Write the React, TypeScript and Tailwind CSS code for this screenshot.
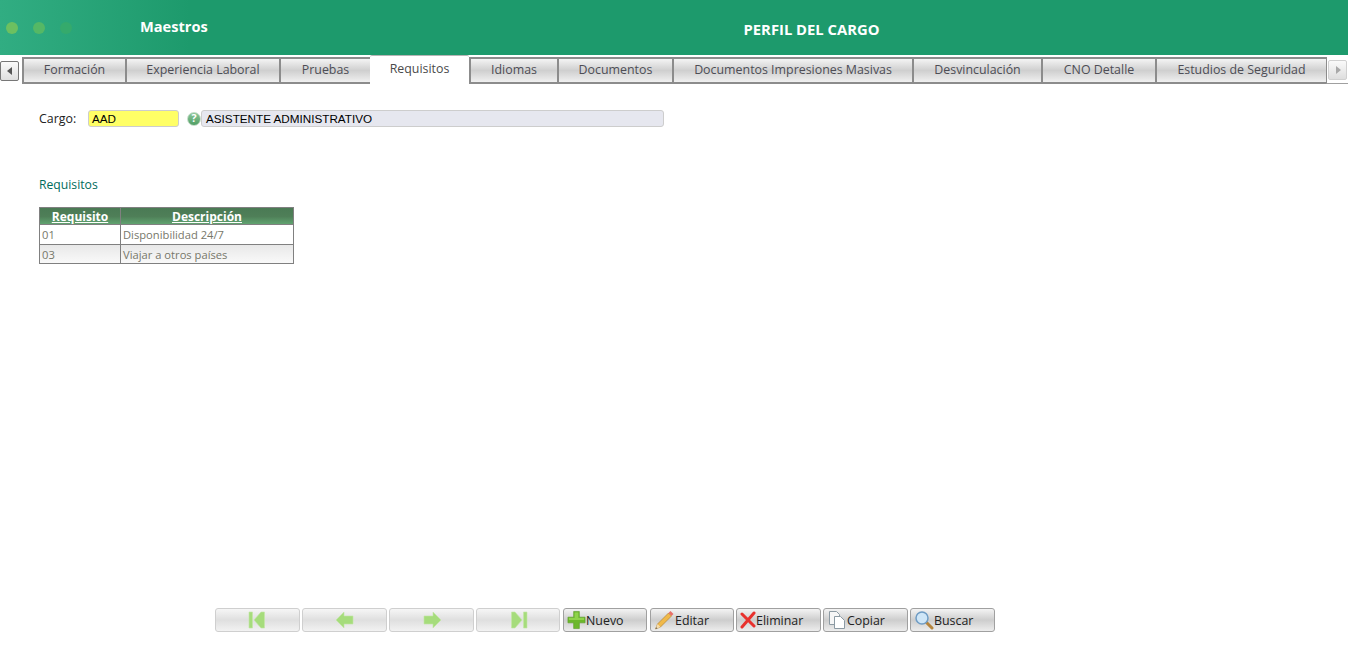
import React from "react";

const font = "font-['Open_Sans','Noto_Sans',sans-serif]";

const tabs = [
    { label: "Formación", w: "w-[103px]" },
    { label: "Experiencia Laboral", w: "w-[154px]" },
    { label: "Pruebas", w: "w-[91px]" },
    { label: "Requisitos", w: "w-[99px]", active: true },
    { label: "Idiomas", w: "w-[88px]" },
    { label: "Documentos", w: "w-[115px]" },
    { label: "Documentos Impresiones Masivas", w: "w-[240px]" },
    { label: "Desvinculación", w: "w-[129px]" },
    { label: "CNO Detalle", w: "w-[114px]" },
    { label: "Estudios de Seguridad", w: "w-[171px]" },
];

function Tab({ label, w, active }: { label: string; w: string; active?: boolean }) {
    if (active) {
        return (
            <div className={`${w} h-[29px] -mt-[2px] pb-[1px] shrink-0 flex items-center justify-center bg-white border-t border-[#b5b5b5] text-[12.4px] text-[#4a4a4a] rounded-t-[2px]`}>
                {label}
            </div>
        );
    }
    return (
        <div className={`${w} h-[27px] pb-[1px] shrink-0 flex items-center justify-center border-l-2 border-t-2 border-b-2 border-[#8c8c8c] bg-gradient-to-b from-[#f4f4f4] via-[#cfcfcf] to-[#f0f0f0] text-[12.4px] text-[#4d4d55]`}>
            {label}
        </div>
    );
}

function ScrollBtn({ dir, dim }: { dir: "left" | "right"; dim?: boolean }) {
    return (
        <div className={`w-[19px] h-[20px] shrink-0 flex items-center justify-center rounded-[2px] border bg-gradient-to-b from-[#fafafa] to-[#dedede] ${dim ? "border-[#d0d0d0]" : "border-[#777]"}`}>
            <svg width="6" height="8" viewBox="0 0 6 8">
                <path d={dir === "left" ? "M5 0v8L0 4z" : "M1 0v8l5-4z"} fill={dim ? "#a8a8a8" : "#555"} />
            </svg>
        </div>
    );
}

function NavIcon({ kind }: { kind: "first" | "prev" | "next" | "last" }) {
    const paths = {
        first: "M1 2h3.5v16H1zM6 10l7-8h3.5v16H13z",
        prev: "M1 10l8-8v4h9v8H9v4z",
        next: "M19 10l-8-8v4H2v8h9v4z",
        last: "M19 2h-3.5v16H19zM14 10L7 2H3.5v16H7z",
    };
    return (
        <svg width="20" height="20" viewBox="0 0 20 20">
            <path d={paths[kind]} fill="#a6dc7c" stroke="#c4e8a6" strokeWidth="0.6" strokeLinejoin="round" />
        </svg>
    );
}

function NavButton({ kind, w }: { kind: "first" | "prev" | "next" | "last"; w: string }) {
    return (
        <div className={`${w} h-[24px] shrink-0 flex items-center justify-center rounded-[3px] border border-[#cfcfcf] bg-gradient-to-b from-[#f6f6f6] via-[#dfdfdf] to-[#f2f2f2]`}>
            <NavIcon kind={kind} />
        </div>
    );
}

function ActionButton({ icon, label, w }: { icon: React.ReactNode; label: string; w: string }) {
    return (
        <div className={`${w} h-[24px] shrink-0 flex items-center pl-[3px] rounded-[3px] border border-[#a0a0a0] bg-gradient-to-b from-[#f4f4f4] via-[#cdcdcd] to-[#ededed] text-[12.4px] text-[#222]`}>
            {icon}
            <span className="pt-[2px]">{label}</span>
        </div>
    );
}

const PlusIcon = (
    <svg width="19" height="20" viewBox="0 0 20 20" className="shrink-0">
        <path d="M7 1h6v6h6v6h-6v6H7v-6H1V7h6z" fill="#6cb82c" stroke="#559a1e" strokeWidth="0.6" />
        <path d="M8 2h4v6H8zM2 8h16v2H2z" fill="#8fd34a" />
    </svg>
);

const PencilIcon = (
    <svg width="21" height="20" viewBox="0 0 20 20" className="shrink-0">
        <path d="M1 19l2-5L14 3l3 3L6 17z" fill="#f0b94a" stroke="#a9792b" strokeWidth="0.6" />
        <path d="M14 3l2-2 3 3-2 2z" fill="#e8706a" />
        <path d="M1 19l2-5 3 3z" fill="#f3dcb0" />
        <path d="M1 19l.7-1.800 1.100 1.100z" fill="#444" />
    </svg>
);

const CrossIcon = (
    <svg width="16" height="20" viewBox="0 0 16 20" className="shrink-0">
        <path d="M2 4l12 12M14 3L2 17" stroke="#e8312d" strokeWidth="3" strokeLinecap="round" fill="none" />
    </svg>
);

const CopyIcon = (
    <svg width="20" height="20" viewBox="0 0 20 20" className="shrink-0">
        <path d="M2.500 1.500h7l3 3v10h-10z" fill="#f6f6f6" stroke="#8c9aa3" />
        <path d="M7.500 6.500h6l4 4v8h-10z" fill="#fff" stroke="#8c9aa3" />
    </svg>
);

const SearchIcon = (
    <svg width="20" height="20" viewBox="0 0 20 20" className="shrink-0">
        <path d="M12 12l6 6" stroke="#b5843c" strokeWidth="3" strokeLinecap="round" />
        <circle cx="8" cy="8" r="6" fill="#cfe6f7" stroke="#6f9cc4" strokeWidth="1.500" />
    </svg>
);

export default function App() {
    return (
        <div className={`${font} w-[1348px] h-[657px] overflow-hidden bg-white`}>
            <header className="h-[55px] flex bg-[#1d9a6c] bg-gradient-to-r from-[#31ad82] to-[#1d9a6c] bg-[length:190px_100%] bg-no-repeat text-white">
                <div className="w-[140px] shrink-0 flex items-center gap-[15px] pl-[6px]">
                    <span className="w-[12px] h-[12px] rounded-full bg-[#6cc060]" />
                    <span className="w-[12px] h-[12px] rounded-full bg-[#55b865]" />
                    <span className="w-[12px] h-[12px] rounded-full bg-[#35aa6c]" />
                </div>
                <div className="w-[200px] pt-[14px] text-[14.6px] font-bold leading-[24px]">Maestros</div>
                <div className="w-[943px] pt-[17px] text-center text-[14.8px] font-bold leading-[24px]">PERFIL DEL CARGO</div>
            </header>

            <nav className="mt-[2px] h-[27px] flex items-center">
                <div className="w-[22px] shrink-0">
                    <ScrollBtn dir="left" />
                </div>
                {tabs.map((t) => (
                    <Tab key={t.label} {...t} />
                ))}
                <div className="w-[22px] pl-[1px] shrink-0 h-full flex items-center border-l border-[#8c8c8c] border-b border-b-[#a0a0a0]">
                    <ScrollBtn dir="right" dim />
                </div>
            </nav>

            <section className="pl-[39px] pt-[26px]">
                <div className="h-[17px] flex items-center">
                    <label className="w-[49px] pt-[1px] text-[12.4px] text-[#222]">Cargo:</label>
                    <div className="w-[91px] h-[17px] pl-[3px] pt-[1px] flex items-center rounded-[3px] border border-[#cdcdcd] bg-[#ffff66] font-['Liberation_Sans',sans-serif] text-[11.7px] text-black">
                        AAD
                    </div>
                    <div className="ml-[8px] w-[14px] h-[14px] rounded-full bg-gradient-to-b from-[#8cc79a] to-[#4f9e64] border border-[#c5dcc9] flex items-center justify-center text-[10.5px] font-bold leading-none text-white">
                        ?
                    </div>
                    <div className="w-[463px] h-[17px] pl-[4px] pt-[1px] flex items-center rounded-[3px] border border-[#cdcdcd] bg-[#e6e7ef] font-['Liberation_Sans',sans-serif] text-[11.7px] text-black">
                        ASISTENTE ADMINISTRATIVO
                    </div>
                </div>

                <h2 className="mt-[49px] text-[12.2px] leading-[17px] font-normal text-[#006b5b]">Requisitos</h2>

                <table className="mt-[14px] w-[255px] table-fixed border-collapse border border-[#808080]">
                    <thead>
                        <tr className="h-[17px] bg-gradient-to-b from-[#4a7a54] via-[#4f7f58] to-[#62a873] text-white text-[12px]">
                            <th className="w-[81px] p-0 border border-[#808080] font-bold underline leading-[15px]">Requisito</th>
                            <th className="p-0 border border-[#808080] font-bold underline leading-[15px]">Descripción</th>
                        </tr>
                    </thead>
                    <tbody className="text-[#77776a] text-[11.2px] leading-[16px]">
                        <tr className="h-[20px] bg-white">
                            <td className="p-0 pl-[2px] pt-[1px] border border-[#808080]">01</td>
                            <td className="p-0 pl-[2px] pt-[1px] border border-[#808080]">Disponibilidad 24/7</td>
                        </tr>
                        <tr className="h-[19px] bg-gradient-to-b from-[#e8e8e8] to-[#fafafa]">
                            <td className="p-0 pl-[2px] pt-[2px] border border-[#808080]">03</td>
                            <td className="p-0 pl-[2px] pt-[2px] border border-[#808080]">Viajar a otros países</td>
                        </tr>
                    </tbody>
                </table>
            </section>

            <footer className="mt-[344px] pl-[215px] flex gap-[2px]">
                <NavButton kind="first" w="w-[85px]" />
                <NavButton kind="prev" w="w-[85px]" />
                <NavButton kind="next" w="w-[85px]" />
                <NavButton kind="last" w="w-[84px]" />
                <div className="ml-[1px] flex gap-[3px]">
                    <ActionButton icon={PlusIcon} label="Nuevo" w="w-[84px]" />
                    <ActionButton icon={PencilIcon} label="Editar" w="w-[84px]" />
                </div>
                <ActionButton icon={CrossIcon} label="Eliminar" w="w-[85px]" />
                <ActionButton icon={CopyIcon} label="Copiar" w="w-[85px]" />
                <ActionButton icon={SearchIcon} label="Buscar" w="w-[85px]" />
            </footer>
        </div>
    );
}
